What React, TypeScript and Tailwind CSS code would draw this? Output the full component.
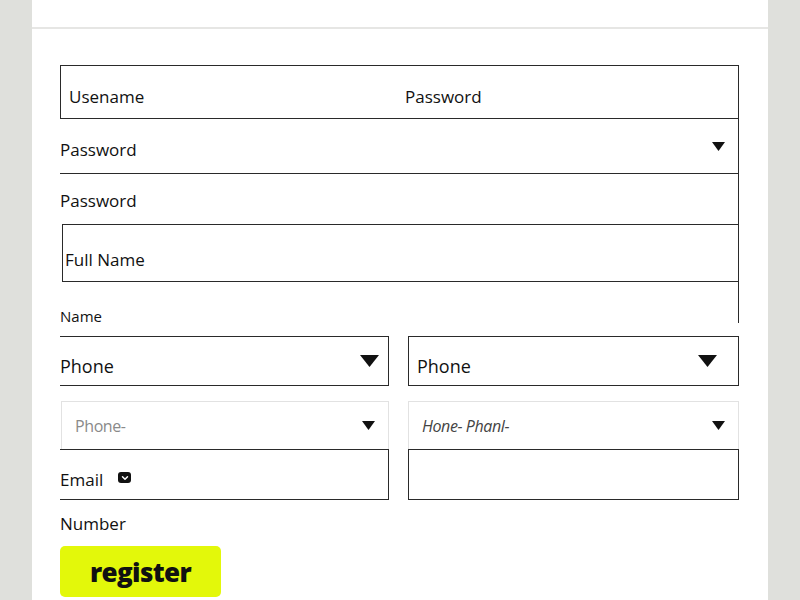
import { ChevronDown } from "lucide-react";

function Tri({ big }: { big?: boolean }) {
  // solid down-pointing caret used on the select rows
  return big ? (
    <svg width="19" height="12" viewBox="0 0 19 12" className="shrink-0">
      <path d="M0 0 H19 L9.5 12 Z" fill="#111" />
    </svg>
  ) : (
    <svg width="13" height="9" viewBox="0 0 13 9" className="shrink-0">
      <path d="M0 0 H13 L6.5 9 Z" fill="#111" />
    </svg>
  );
}

export default function App() {
  return (
    <div className="min-h-[600px] w-[800px] bg-[#dfe0dc] font-['Open_Sans',sans-serif] text-[#111]">
      <div className="ml-[32px] w-[736px] min-h-[600px] bg-white">
        {/* header strip */}
        <div className="h-[29px] border-b-2 border-[#e6e6e4]" />

        <div className="pl-[28px] pt-[36px] w-[707px]">
          {/* Username / Password */}
          <div className="h-[54px] border border-[#2a2a2a] flex items-center text-[17px] pt-[9px]">
            <span className="w-[344px] pl-[8px]">Usename</span>
            <span>Password</span>
          </div>

          <div className="h-[204px] border-r border-[#2a2a2a] flex flex-col">
            <div className="h-[55px] border-b border-[#2a2a2a] flex items-center justify-between pr-[13px] pt-[8px] text-[17px]">
              <span>Password</span>
              <span className="-mt-[8px]">
                <Tri />
              </span>
            </div>
            <div className="h-[50px] flex items-center pt-[4px] text-[17px]">Password</div>
            <div className="h-[58px] ml-[2px] border border-r-0 border-[#2a2a2a] flex items-center pl-[2px] pt-[14px] text-[17px]">
              Full Name
            </div>
            <div className="flex-1 flex items-end text-[15px] -mb-[4px]">Name</div>
          </div>

          {/* two-column grid */}
          <div className="mt-[13px] grid grid-cols-[329px_331px] gap-x-[19px]">
            <div className="h-[50px] border border-l-0 border-[#2a2a2a] flex items-center justify-between pr-[9px] text-[18px]">
              <span className="pt-[10px]">Phone</span>
              <Tri big />
            </div>
            <div className="h-[50px] border border-[#2a2a2a] flex items-center justify-between pl-[8px] pr-[21px] text-[18px]">
              <span className="pt-[10px]">Phone</span>
              <Tri big />
            </div>

            <div className="mt-[15px] h-[48px] ml-[1px] border border-b-0 border-[#e2e2e2] flex items-center justify-between pl-[13px] pr-[13px]">
              <span className="text-[16px] text-[#8a8a8a] tracking-tight">Phone-</span>
              <Tri />
            </div>
            <div className="mt-[15px] h-[48px] border border-b-0 border-[#e2e2e2] flex items-center justify-between pl-[13px] pr-[13px]">
              <span className="text-[16px] text-[#444] italic tracking-tight">Hone- Phanl-</span>
              <Tri />
            </div>

            <div className="h-[51px] border border-l-0 border-[#2a2a2a] flex items-center pt-[10px] text-[17px]">
              <span>Email</span>
              <span className="ml-[15px] -mt-[4px] w-[13px] h-[11px] rounded-[3px] bg-[#111] flex items-center justify-center">
                <ChevronDown size={10} strokeWidth={3.5} color="#fff" />
              </span>
            </div>
            <div className="h-[51px] border border-[#2a2a2a]" />
          </div>

          <div className="mt-[11px] text-[17px]">Number</div>

          <button className="mt-[9px] w-[161px] h-[51px] rounded-[5px] bg-[#e3f80a] text-[26px] font-extrabold tracking-tight flex items-center justify-center pt-[2px]">
            register
          </button>
        </div>
      </div>
    </div>
  );
}
